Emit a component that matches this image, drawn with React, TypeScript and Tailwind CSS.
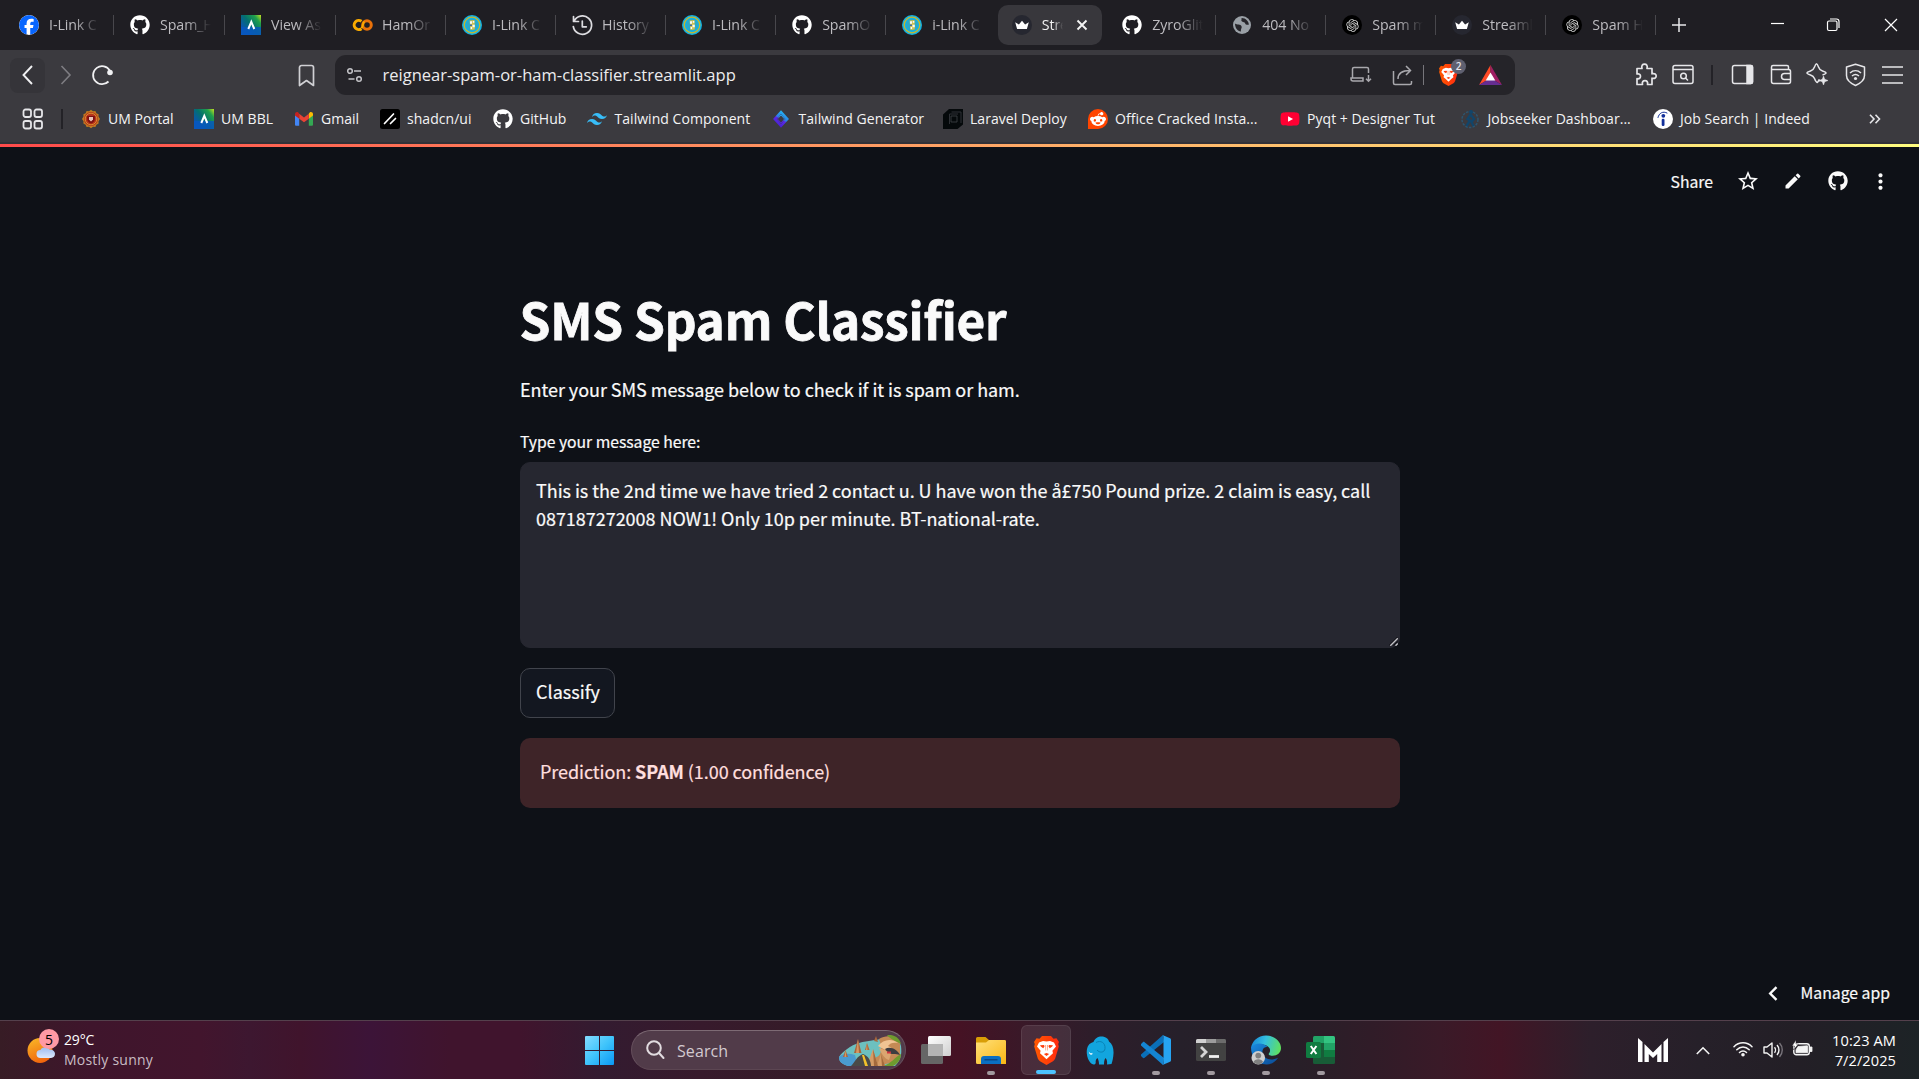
import React from "react";
import { FaFacebook, FaGithub, FaRedditAlien, FaYoutube } from "react-icons/fa6";
import { SiTailwindcss } from "react-icons/si";
import { RiOpenaiFill } from "react-icons/ri";
import { MdEdit, MdStarBorder, MdMoreVert } from "react-icons/md";

/* ---------- brand marks ---------- */

const ViewMark = () => (
  <svg width="20" height="20" viewBox="0 0 20 20">
    <defs>
      <linearGradient id="vm" x1="1" y1="0" x2="0.1" y2="0.7">
        <stop offset="0" stopColor="#c8e020" />
        <stop offset="0.25" stopColor="#1fa04c" />
        <stop offset="0.6" stopColor="#04706e" />
        <stop offset="1" stopColor="#0a55b0" />
      </linearGradient>
    </defs>
    <rect width="20" height="20" fill="url(#vm)" />
    <path d="M0 12h20v8H0z" fill="#0758c0" opacity="0.8" />
    <path d="M7.300 14 10.300 6.800 13.300 14" fill="none" stroke="#fff" strokeWidth="2" />
  </svg>
);

const ColabMark = () => (
  <svg width="21" height="14" viewBox="0 0 21 14" fill="none" strokeWidth="3">
    <circle cx="15" cy="7" r="4.300" stroke="#e8710a" />
    <path d="M9.500 3.300a4.600 4.600 0 1 0 0 7.400" stroke="#f9ab00" />
    <path d="M9.700 10.200 12 3.500" stroke="#f9ab00" strokeWidth="2" />
  </svg>
);

const SealMark = () => (
  <svg width="20" height="20" viewBox="0 0 20 20">
    <circle cx="10" cy="10" r="10" fill="#12b2e4" />
    <circle cx="10" cy="10" r="7.800" fill="none" stroke="#c9b62c" strokeWidth="1.300" />
    <circle cx="10" cy="10" r="5.800" fill="#2aa9c8" />
    <path d="M7.500 5.500 12.500 5 12.800 14.500 8.500 15z" fill="#d3c04a" />
    <path d="M8 6.200h2v2.500H8zM10.500 9.800h2.300v2.400h-2.300zM10.800 6h1.500v1.800h-1.500zM8.600 12h1.500v2H8.600z" fill="#f4f8f8" />
    <path d="M8 9.500h2v1.500H8z" fill="#3f6fa8" />
  </svg>
);

const UmMark = () => (
  <svg width="20" height="20" viewBox="0 0 20 20">
    <path d="m10 .8 2 1.400 2.400-.2 1 2.200 2.200 1-.1 2.400 1.500 2.400-1.500 2.200.1 2.400-2.200 1.100-1 2.200-2.400-.2-2 1.500-2-1.500-2.400.2-1-2.200-2.200-1.100.1-2.400L1 10l1.500-2.400-.1-2.400 2.200-1 1-2.200 2.400.2z" fill="#c07a20" />
    <circle cx="10" cy="10" r="7" fill="#b8321c" />
    <circle cx="10" cy="10" r="5.800" fill="none" stroke="#d6972c" strokeWidth="0.900" />
    <path d="M6.200 7h7.600v3c0 2.500-2.200 4-3.800 4.600C8.500 14 6.200 12.500 6.200 10z" fill="#7d1010" />
    <path d="M8 8h4v2.400L10 12.400l-2-2z" fill="#e9c4b8" />
  </svg>
);

const GmailMark = () => (
  <svg width="20" height="20" viewBox="0 0 20 20">
    <path d="M1 5.500v10c0 .8.500 1.300 1.300 1.300h2.900V8.500z" fill="#4285f4" />
    <path d="M19 5.500v10c0 .8-.5 1.300-1.300 1.300h-2.900V8.500z" fill="#34a853" />
    <path d="M14.800 4.800v4.900L19 6.500V5c0-1.900-2.100-2.500-3.300-1.600z" fill="#fbbc04" />
    <path d="M5.200 9.700V4.800L10 8.400l4.800-3.600v4.900L10 13.300z" fill="#ea4335" />
    <path d="M1 5v1.500l4.200 3.200V4.800l-.9-1.400C3.100 2.500 1 3.100 1 5z" fill="#c5221f" />
  </svg>
);

const ShadcnMark = () => (
  <svg width="20" height="20" viewBox="0 0 20 20">
    <rect width="20" height="20" rx="2.500" fill="#000" />
    <path d="M4.500 14.500 13.500 5M10.500 14.500 15.500 9.500" stroke="#fff" strokeWidth="1.700" strokeLinecap="round" />
  </svg>
);

const DiamondMark = () => (
  <svg width="20" height="20" viewBox="0 0 20 20">
    <defs>
      <linearGradient id="dm" x1="0.8" y1="0" x2="0.3" y2="1">
        <stop offset="0" stopColor="#22b8f0" />
        <stop offset="0.5" stopColor="#2f7ae8" />
        <stop offset="0.55" stopColor="#5a2bea" />
        <stop offset="1" stopColor="#4a1fd0" />
      </linearGradient>
    </defs>
    <path d="M10 3.200 16.200 10 10 16.800 3.800 10z" fill="#3b3a40" stroke="url(#dm)" strokeWidth="2.600" />
    <path d="M10 6 13.600 10 10 14 6.400 10z" fill="#3b3a40" stroke="url(#dm)" strokeWidth="1" />
  </svg>
);

const LaravelMark = () => (
  <svg width="20" height="20" viewBox="0 0 20 20">
    <path d="M0 5.500 6 0h14v15.500L14.500 20H0z" fill="#05090b" />
    <path d="M6.500 15V5H15M8.500 3h9.500v11" fill="none" stroke="#33373b" strokeWidth="0.900" />
    <path d="M8 7h6v6H8z" fill="none" stroke="#3a3e42" strokeWidth="0.900" />
  </svg>
);

const RedditMark = () => (
  <span className="flex size-5 items-center justify-center rounded-full rounded-bl-[3px] bg-[#ff4500]">
    <FaRedditAlien size={16} color="#fff" />
  </span>
);

const JobMark = () => (
  <svg width="20" height="20" viewBox="0 0 20 20">
    <circle cx="10" cy="10.500" r="8" fill="none" stroke="#2c5570" strokeWidth="1.500" strokeDasharray="2.500 1.200" />
    <circle cx="11" cy="3" r="2" fill="#12456a" />
    <path d="M10.500 5.500 7.500 10l2.500 1.500L6.500 17M10.500 5.500l3.500 4.500-2.500 3 2 4" fill="none" stroke="#12456a" strokeWidth="2.400" />
  </svg>
);

const IndeedMark = () => (
  <svg width="20" height="20" viewBox="0 0 20 20">
    <circle cx="10" cy="10" r="10" fill="#fff" />
    <circle cx="10.300" cy="6.800" r="1.900" fill="#12309a" />
    <rect x="8.700" y="9.800" width="2.800" height="7.200" rx="1.200" fill="#12309a" />
    <path d="M5 8.500C6 4 10 1.800 14 4" fill="none" stroke="#12309a" strokeWidth="1" strokeLinecap="round" />
  </svg>
);

const CrownMark = () => (
  <svg width="20" height="20" viewBox="0 0 20 20">
    <circle cx="10" cy="10" r="10" fill="#262730" />
    <path d="M3.200 7.200 6.900 9.500 10 5.800l3.100 3.700 3.700-2.300-1.900 6.900H5.100z" fill="#fff" />
  </svg>
);

const GlobeMark = () => (
  <svg width="20" height="20" viewBox="0 0 20 20">
    <circle cx="10" cy="10" r="9" fill="#9aa0a6" />
    <path d="M3 8.500C5 10 8.500 9 9.500 11.200c.8 2-1 2.300-.5 5.300-3.500-.4-6-3.500-6-8zM9.500 3c.5 1.500-1 2.500.5 3.500s2.500.2 3.200 2c.5 1.500 2 1.300 3.600 1.200C17 6.500 13.500 2.800 9.500 3z" fill="#26252a" />
  </svg>
);

const HistoryMark = () => (
  <svg width="21" height="21" viewBox="0 0 21 21" fill="none" stroke="#dcdce0" strokeWidth="1.700" strokeLinecap="round" strokeLinejoin="round">
    <path d="M1.500 1.500v5h5M2 6.300a9.200 9.200 0 1 1-.7 5.200" />
    <path d="M10.300 6v5.800h4" />
  </svg>
);

const OpenAiMark = () => (
  <span className="flex size-5 items-center justify-center rounded-full bg-black">
    <RiOpenaiFill size={15} color="#d8d8d8" />
  </span>
);

const BraveMark = ({ size }: { size: number }) => (
  <svg width={size} height={size * 1.16} viewBox="0 0 25 29">
    <defs>
      <linearGradient id="br" x1="0" y1="0" x2="1" y2="0">
        <stop offset="0" stopColor="#ff5a00" />
        <stop offset="1" stopColor="#ff2a10" />
      </linearGradient>
    </defs>
    <path d="M8 0h9l2.500 2.800 3-.6L25 6l-.8 2 .6 2.500-3.600 12c-.5 1.200-1.200 2-2.200 2.700L12.500 29 6 25.200c-1-.7-1.700-1.500-2.200-2.700L.2 10.500.8 8 0 6l2.500-3.800 3 .6z" fill="url(#br)" />
    <path d="M12.500 5.500 16 5l4 1.500 2 4-3.600 4.200.6 2.600-2.500 2.200-4 3.700-4-3.700L6 17.300l.6-2.600L3 10.500l2-4L9 5z" fill="#fff" />
    <path d="M6 9.200 10 9l.6 1.200L9.300 12.200 7 10.800zM19 9.200 15 9l-.6 1.200 1.300 2 2.300-1.400zM12.500 17l2.600 1-2.600 1.900L9.900 18z" fill="#ff4010" />
    <path d="M11.300 9h.8v5.500h-.6zM13 9h.8l-.2 5.500H13z" fill="#ff8a60" />
  </svg>
);

/* ---------- tab strip ---------- */

type Tab = { icon: React.ReactNode; title: string; w?: string; active?: boolean; noSep?: boolean };

const gh = <FaGithub size={20} color="#fff" />;

const tabs: Tab[] = [
  { icon: <FaFacebook size={20} color="#0866ff" className="rounded-full bg-white" />, title: "I-Link C", w: "w-[111px]" },
  { icon: gh, title: "Spam_H", w: "w-[111px]" },
  { icon: <ViewMark />, title: "View Ass", w: "w-[111px]" },
  { icon: <ColabMark />, title: "HamOr" },
  { icon: <SealMark />, title: "I-Link C" },
  { icon: <HistoryMark />, title: "History" },
  { icon: <SealMark />, title: "I-Link C" },
  { icon: gh, title: "SpamO" },
  { icon: <SealMark />, title: "i-Link C", noSep: true },
  { icon: <CrownMark />, title: "Stre", active: true, noSep: true },
  { icon: gh, title: "ZyroGlit" },
  { icon: <GlobeMark />, title: "404 No" },
  { icon: <OpenAiMark />, title: "Spam m" },
  { icon: <CrownMark />, title: "Streaml" },
  { icon: <OpenAiMark />, title: "Spam H" },
];

const TabItem = ({ tab }: { tab: Tab }) => {
  if (tab.active)
    return (
      <div className="w-[110.040px] shrink-0 pr-[3.500px] pl-[2.500px]">
        <div className="flex h-10 items-center rounded-[10px] bg-[#38373c] pl-[14px]">
          {tab.icon}
          <span className="ml-[9.500px] w-[21.500px] overflow-hidden pb-px whitespace-nowrap text-[#f2f2f2] [mask-image:linear-gradient(to_right,black_50%,transparent_100%)]">
            {tab.title}
          </span>
          <svg className="ml-[13px]" width="12" height="12" viewBox="0 0 12 12" stroke="#f4f4f4" strokeWidth="1.900">
            <path d="M1.500 1.500l9 9M10.500 1.500l-9 9" />
          </svg>
        </div>
      </div>
    );
  return (
    <div className={`flex h-10 shrink-0 items-center pl-4 ${tab.w ?? "w-[110.040px]"}`}>
      <span className="flex w-[21px] shrink-0 justify-center">{tab.icon}</span>
      <span className="ml-[9.500px] w-[51px] overflow-hidden pb-px whitespace-nowrap text-[#bdbcc0] [mask-image:linear-gradient(to_right,black_50%,transparent_100%)]">
        {tab.title}
      </span>
      {!tab.noSep && <span className="ml-auto h-5 w-px bg-[#48474c]" />}
    </div>
  );
};

const TabStrip = () => (
  <div className="flex h-[50px] items-center bg-[#1f1e23] pl-[2.500px] text-[14.200px] tracking-[-0.005em]">
    {tabs.map((t, i) => (
      <TabItem key={i} tab={t} />
    ))}
    <svg className="ml-[16px]" width="14" height="14" viewBox="0 0 14 14" stroke="#e8e8ea" strokeWidth="1.500">
      <path d="M7 0v14M0 7h14" />
    </svg>
    <div className="ml-auto flex items-center">
      <svg width="57" height="20" viewBox="0 0 57 20" stroke="#fff" strokeWidth="1.200">
        <path d="M21 8.500h13" />
      </svg>
      <svg width="56" height="20" viewBox="0 0 56 20" fill="none" stroke="#fff" strokeWidth="1.200">
        <rect x="20.500" y="6" width="9.500" height="9.500" rx="1.500" />
        <path d="M23 4h6.500a2.500 2.500 0 0 1 2.500 2.500V13" />
      </svg>
      <svg width="56" height="20" viewBox="0 0 56 20" stroke="#fff" strokeWidth="1.200">
        <path d="M22 4l12 12M34 4l-12 12" />
      </svg>
    </div>
  </div>
);

/* ---------- navigation bar ---------- */

const NavBar = () => (
  <div className="flex h-[50px] items-center pl-[10px]">
    <div className="flex h-[35px] w-[35px] items-center justify-center rounded-[8px] bg-[#353439]">
      <svg width="12" height="20" viewBox="0 0 12 20" fill="none" stroke="#f0f0f2" strokeWidth="1.900">
        <path d="M10 1 1.500 10l8.500 9" />
      </svg>
    </div>
    <svg className="ml-[14.500px]" width="12" height="20" viewBox="0 0 12 20" fill="none" stroke="#7e7d82" strokeWidth="1.600">
      <path d="M1.500 1 10 10l-8.500 9" />
    </svg>
    <svg className="ml-[19.500px]" width="24" height="22" viewBox="0 0 24 22" fill="none" stroke="#f0f0f2" strokeWidth="1.800">
      <path d="M17.500 17.500A9 9 0 1 1 18.800 6.500" />
      <circle cx="19" cy="8.500" r="2.800" fill="#f0f0f2" stroke="none" />
    </svg>
    <svg className="ml-[182px]" width="20" height="23" viewBox="0 0 20 23" fill="none" stroke="#d0d0d4" strokeWidth="1.700" strokeLinejoin="round">
      <path d="M2.500 21.500V3.500a2 2 0 0 1 2-2h10a2 2 0 0 1 2 2v18l-7-5z" />
    </svg>
    <div className="ml-[18px] flex h-10 w-[1180px] items-center rounded-[11px] bg-[#252429] pl-[11px]">
      <svg width="18" height="16" viewBox="0 0 18 16" fill="none" stroke="#c4c4c8" strokeWidth="1.500">
        <circle cx="4" cy="4" r="2.300" />
        <path d="M8 4h7M2.500 12h6" />
        <circle cx="13" cy="12" r="2.300" />
      </svg>
      <span className="ml-[18.500px] text-[16.550px] leading-none whitespace-nowrap text-[#ececee]">
        reignear-spam-or-ham-classifier.streamlit.app
      </span>
      <div className="ml-auto flex items-center">
        <svg width="22" height="18" viewBox="0 0 22 18" fill="none" stroke="#a9a8ad" strokeWidth="1.500">
          <path d="M2.500 12V3a1.500 1.500 0 0 1 1.500-1.500h13A1.500 1.500 0 0 1 18.500 3v4M1 12h12v3H3a2 2 0 0 1-2-2zM18.500 9v6M16 12.800l2.500 2.500 2.500-2.500" />
        </svg>
        <svg className="ml-[20px]" width="21" height="21" viewBox="0 0 21 21" fill="none" stroke="#a9a8ad" strokeWidth="1.500">
          <path d="M1.500 6v12a1.500 1.500 0 0 0 1.500 1.500h15a1.500 1.500 0 0 0 1.500-1.500v-2M6 14c0-6 4-8.500 12-8.500M14 1l4.500 4.500L14 10" />
        </svg>
        <span className="ml-[10px] h-5 w-px bg-[#77767b]" />
        <span className="relative ml-[15px] pt-px">
          <BraveMark size={19} />
          <span className="absolute -top-[4px] left-[12px] flex size-[15px] items-center justify-center rounded-full bg-[#5f6070] text-[10px] font-semibold text-[#e4e4ea]">
            2
          </span>
        </span>
        <svg className="mr-[13px] ml-[21px]" width="23" height="20" viewBox="0 0 23 20">
          <path d="M11.500 0 0 20l11.500-7z" fill="#ff4a26" />
          <path d="M11.500 0 23 20l-11.500-7z" fill="#9e1f63" />
          <path d="M0 20h23l-11.500-7z" fill="#662d91" />
          <path d="M11.500 7.500 16.300 15.500H6.700z" fill="#fff" />
        </svg>
      </div>
    </div>
    <div className="ml-auto flex items-center pr-2 text-[#e6e6e9]">
      <svg width="37" height="24" viewBox="0 0 37 24" fill="none" stroke="currentColor" strokeWidth="1.700" strokeLinejoin="round">
        <path d="M10 5.500h5c-.8-2.800.5-4.300 2.500-4.300S20.800 2.700 20 5.500h5v5.300c2.800-.8 4.200.5 4.200 2.200S27.800 16 25 15.200v6.300h-4.500c.6-2.600-.6-3.800-2.500-3.800s-3.200 1.200-2.500 3.800H10v-5.800c2.500.4 3.500-.7 3.500-2.400S12.500 10.500 10 11z" />
      </svg>
      <svg width="38" height="24" viewBox="0 0 38 24" fill="none" stroke="currentColor" strokeWidth="1.500">
        <rect x="9" y="2.500" width="20" height="18" rx="2" />
        <path d="M9 6.500h20M21.500 15l2.500 2.500" />
        <circle cx="19.500" cy="13" r="2.800" />
      </svg>
      <span className="mr-[9px] ml-[9px] h-5 w-[2px] bg-[#232227]" />
      <svg width="41" height="24" viewBox="0 0 41 24" fill="none" stroke="currentColor" strokeWidth="1.500">
        <rect x="10.500" y="2.500" width="20" height="18" rx="2" />
        <path d="M25 2.500h4a1.500 1.500 0 0 1 1.500 1.500v15a1.500 1.500 0 0 1-1.500 1.500h-4z" fill="currentColor" />
      </svg>
      <svg width="37" height="24" viewBox="0 0 37 24" fill="none" stroke="currentColor" strokeWidth="1.500">
        <path d="M25.500 6.500V4a1.500 1.500 0 0 0-1.500-1.500H10A1.500 1.500 0 0 0 8.500 4v14.500a2 2 0 0 0 2 2h15a2 2 0 0 0 2-2v-10a2 2 0 0 0-2-2h-17M27.500 10.500h-6a3 3 0 0 0 0 6h6" />
      </svg>
      <svg width="37" height="24" viewBox="0 0 37 24" fill="none" stroke="currentColor" strokeWidth="1.500" strokeLinejoin="round">
        <path d="M19.500 18.500 19 16.800 17.500 19.500Q16 19.500 14.500 15.500 13.500 13 10.500 12 7 10.800 7 10q0-.8 3.500-2 3-1 4-4Q15.700.8 16.500.8t2 3.200q1 3 4 4 3.500 1.200 3.500 2t-3.500 2" />
        <path d="m23.500 13 1.200 3.300 3.300 1.200-3.300 1.200-1.200 3.300-1.200-3.300-3.300-1.200 3.300-1.200z" fill="currentColor" strokeWidth="0.500" />
      </svg>
      <svg width="37" height="24" viewBox="0 0 37 24" fill="none" stroke="currentColor" strokeWidth="1.500" strokeLinejoin="round">
        <path d="M18.500 1.200 27.500 4v8.500c0 5-4.500 8-9 10-4.500-2-9-5-9-10V4z" />
        <path d="M13 10c3.300-3 7.700-3 11 0M15 13c2.200-1.800 4.800-1.800 7 0" />
        <circle cx="18.500" cy="15.500" r="1.600" fill="currentColor" stroke="none" />
      </svg>
      <svg width="37" height="24" viewBox="0 0 37 24" stroke="currentColor" strokeWidth="1.700">
        <path d="M8 4h21M8 12h21M8 20h21" />
      </svg>
    </div>
  </div>
);

/* ---------- bookmarks ---------- */

const bookmarks = [
  { w: "w-[113px]", icon: <UmMark />, label: "UM Portal" },
  { w: "w-[100px]", icon: <ViewMark />, label: "UM BBL" },
  { w: "w-[86px]", icon: <GmailMark />, label: "Gmail" },
  { w: "w-[113px]", icon: <ShadcnMark />, label: "shadcn/ui" },
  { w: "w-[94.500px]", icon: gh, label: "GitHub" },
  { w: "w-[184px]", icon: <SiTailwindcss size={20} color="#38bdf8" />, label: "Tailwind Component" },
  { w: "w-[171.500px]", icon: <DiamondMark />, label: "Tailwind Generator" },
  { w: "w-[145px]", icon: <LaravelMark />, label: "Laravel Deploy" },
  { w: "w-[192px]", icon: <RedditMark />, label: "Office Cracked Insta..." },
  { w: "w-[180.500px]", icon: <FaYoutube size={20} color="#ff0033" className="bg-[linear-gradient(#fff,#fff)] bg-[length:8px_8px] bg-center bg-no-repeat" />, label: "Pyqt + Designer Tut" },
  { w: "w-[192.500px]", icon: <JobMark />, label: "Jobseeker Dashboar..." },
  { w: "w-[200px]", icon: <IndeedMark />, label: "Job Search | Indeed" },
];

const BookmarkBar = () => (
  <div className="flex h-[38px] items-center pl-[22px] text-[14px] tracking-[0.003em] text-[#f4f4f5]">
    <svg width="22" height="22" viewBox="0 0 22 22" fill="none" stroke="#e6e6e9" strokeWidth="1.800">
      <rect x="1.500" y="1.500" width="7.500" height="7.500" rx="2" />
      <rect x="12.500" y="1.500" width="7.500" height="7.500" rx="2" />
      <rect x="1.500" y="13" width="7.500" height="7.500" rx="2" />
      <rect x="12.500" y="13" width="7.500" height="7.500" rx="2" />
    </svg>
    <span className="mr-[18px] ml-[16.500px] h-5 w-[2px] bg-[#232227]" />
    {bookmarks.map((b) => (
      <div key={b.label} className={`flex shrink-0 items-center gap-[7.500px] ${b.w}`}>
        <span className="flex w-5 shrink-0 justify-center">{b.icon}</span>
        <span className="pb-[2px] whitespace-nowrap">{b.label}</span>
      </div>
    ))}
    <svg className="mr-[38px] ml-auto" width="12" height="10" viewBox="0 0 12 10" fill="none" stroke="#e6e6e9" strokeWidth="1.600">
      <path d="M1 .8 5 5 1 9.200M6.500.8l4 4.200-4 4.200" />
    </svg>
  </div>
);

/* ---------- app page ---------- */

const AppPage = () => (
  <main className="flex flex-1 flex-col bg-[#0e1117] font-['Noto_Sans_CJK_SC',sans-serif] text-[#fafafa] [-webkit-text-stroke:0.2px]">
    <div className="h-[3px] bg-[linear-gradient(90deg,#ff4b4b,#fffd80)]" />
    <div className="flex h-[70px] items-center justify-end pr-[31px]">
      <span className="text-[15.750px]">Share</span>
      <MdStarBorder className="mb-[2px] ml-[23px]" size={24} />
      <MdEdit className="mb-[2px] ml-[23px]" size={20} />
      <FaGithub className="mb-[2px] ml-[25px]" size={20} />
      <MdMoreVert className="mb-[2px] ml-[20px] -mr-[5px]" size={25} />
    </div>
    <div className="mx-auto mt-[71px] flex w-[880px] flex-col">
      <h1 className="pt-px text-[49.500px] leading-[60px] font-bold tracking-[-0.004em] [-webkit-text-stroke:0.8px]">
        SMS Spam Classifier
      </h1>
      <p className="mt-[26px] pl-[0.500px] text-[18px] leading-[28px] tracking-[-0.002em]">
        Enter your SMS message below to check if it is spam or ham.
      </p>
      <label htmlFor="msg" className="mt-[27px] pl-[0.500px] text-[15.750px] leading-6 tracking-[-0.002em]">
        Type your message here:
      </label>
      <div className="relative mt-2 h-[186px]">
        <textarea
          id="msg"
          className="h-[186px] w-[880px] resize-none rounded-[10px] border border-[#262730] bg-[#262730] py-[13px] pr-[14.500px] pl-[15.500px] text-[18px] leading-[28px] tracking-[-0.002em] outline-none"
          defaultValue="This is the 2nd time we have tried 2 contact u. U have won the å£750 Pound prize. 2 claim is easy, call 087187272008 NOW1! Only 10p per minute. BT-national-rate."
        />
        <svg className="absolute right-[2px] bottom-[2px]" width="9" height="9" viewBox="0 0 9 9">
          <path d="M0 8.500 8.500 0M4.500 8.500l4-4" stroke="#0a0a0e" strokeWidth="1" />
          <path d="M1.300 8.800 8.800 1.300M6.500 8.800l2.300-2.300" stroke="#c4c4c8" strokeWidth="1.300" />
        </svg>
      </div>
      <button className="mt-5 h-[50px] w-[95px] rounded-[10px] border border-[#41444c] bg-[#131720] pb-[3px] pl-[2px] text-[18px]">Classify</button>
      <div className="mt-5 flex h-[70px] items-center rounded-[10px] bg-[#3e2428] px-[20.500px] pb-[3px] text-[18px] tracking-[-0.004em] text-[#ffdede]">
        <p>
          Prediction: <strong className="font-bold">SPAM</strong> (1.00 confidence)
        </p>
      </div>
    </div>
    <div className="mt-auto flex h-[53px] items-center justify-end pr-[29px]">
      <svg width="10" height="15" viewBox="0 0 10 15" fill="none" stroke="#fafafa" strokeWidth="2.400">
        <path d="M8.500 1.200 2.200 7.500l6.300 6.300" />
      </svg>
      <span className="ml-[23px] pb-px text-[15.750px]">Manage app</span>
    </div>
  </main>
);

/* ---------- taskbar ---------- */

const Weather = () => (
  <div className="flex items-center">
    <div className="relative">
      <svg width="30" height="36" viewBox="0 0 30 36">
        <defs>
          <linearGradient id="sun" x1="0.2" y1="0" x2="0.6" y2="1">
            <stop offset="0" stopColor="#f9b526" />
            <stop offset="1" stopColor="#f0620c" />
          </linearGradient>
          <linearGradient id="cl" x1="0" y1="0" x2="0" y2="1">
            <stop offset="0" stopColor="#9dbcf0" />
            <stop offset="1" stopColor="#dde8fb" />
          </linearGradient>
        </defs>
        <circle cx="13" cy="18.500" r="12.500" fill="url(#sun)" />
        <path d="M13.500 26a4 4 0 0 1 0-8c1.500-3.500 7-3.500 9-.5 3.500-.5 5.500 2 5.500 4.300S26.500 26 24 26z" fill="url(#cl)" />
      </svg>
      <span className="absolute -top-[3px] left-[12px] flex size-5 items-center justify-center rounded-full bg-[#ff99a4] text-[14px] text-black">5</span>
    </div>
    <div className="ml-[7px] pb-px text-[14px] leading-5">
      <div className="tracking-[-0.01em] text-white">29°C</div>
      <div className="tracking-[0.016em] text-[#c9bcc4]">Mostly sunny</div>
    </div>
  </div>
);

const SearchArt = () => (
  <svg width="63" height="32" viewBox="0 0 63 32">
    <path d="M0 22C3 17 12 10 20 8 30 5 36 6 44 3c8-3 16 0 18 8 1 8 0 14-6 20H9C3 29 0 27 0 22z" fill="#6cc0bf" />
    <path d="M0 22c4-4 10-4 16-2l2 8-6 3H9C3 29 0 27 0 22z" fill="#4a9bd0" />
    <path d="M40 4c8-5 18-3 21 5v14c-6 6-14 5-22 8l-3-8c6-2 8-8 4-19z" fill="#c58a55" />
    <path d="M48 0c8-1 13 4 14 9-5-3-10-4-14-9zM44 31c8-2 12-9 18-12 0 6-4 10-8 12z" fill="#6f9a2e" />
    <path d="M39 11c5-7 14-8 20-3-5-1-8 0-10 3 3 1 5 4 4 6-5-1-9-3-14-6z" fill="#f0c493" />
    <path d="M40 13c4 1 9 3 12 6l-2 6c-4-1-7-5-10-12z" fill="#dba570" />
    <path d="M15 18 19 4l3.500 14zM26 15l2-7 2.500 7zM35 6l2-5 2 6zM4 22l2.500-7L9 22z" fill="#a8673c" />
    <path d="m17 18 2-14 1 14zM27 15l1-7 .5 7zM5.500 22l1-7 .8 7z" fill="#d79862" />
    <path d="m28 31 6-17 5 17zM38 31l4-12 4 12z" fill="#d59c66" />
    <path d="m34 14 5 17h-4zM42 19l4 12h-3z" fill="#a56a3c" />
    <path d="M12 31c4-4 6-10 12-12 6 2 8 8 8 12z" fill="#4a4a48" />
    <path d="m23 20 3 11h3l-4-11z" fill="#f3c12b" />
    <path d="M46 14c5-3 12 0 15 6-5-2-8 0-10-2-2-1-4-2-5-4z" fill="#3d3d40" />
    <path d="M48 16.500h4v2h-4z" fill="#d2343f" />
  </svg>
);

const TaskItem = ({ children, dot, active }: { children: React.ReactNode; dot?: boolean; active?: boolean }) => (
  <div className="flex w-[55px] shrink-0 justify-center">
    <div
      className={`relative flex h-[50px] w-[50px] items-center justify-center rounded-[6px] ${active ? "border border-white/8 bg-white/9" : ""}`}
    >
      {children}
      {dot && <span className="absolute bottom-0 h-1 w-2 rounded-full bg-[#a29aa0]" />}
      {active && <span className="absolute bottom-0 h-1 w-5 rounded-full bg-[#4cc2ff]" />}
    </div>
  </div>
);

const Taskbar = () => (
  <footer className="flex h-[59px] items-center border-t border-[#54404c] bg-[linear-gradient(90deg,#371c25_0px,#3f152c_90px,#42152d_200px,#3d1730_250px,#40142c_300px,#3c1438_370px,#40142d_450px,#40142d_520px,#331b30_600px,#371a2c_700px,#351b28_810px,#421425_900px,#451224_960px,#3a1828_1020px,#2e1d2a_1090px,#26202a_1180px,#281f28_1300px,#301c28_1370px,#3a1a28_1440px,#421525_1500px,#2d1f2b_1590px,#262029_1700px,#231f26_1800px,#1d2326_1919px)] pl-[27px]">
    <div className="w-[558px]">
      <Weather />
    </div>
    <svg width="29" height="29" viewBox="0 0 29 29">
      <defs>
        <linearGradient id="win" x1="0" y1="0" x2="1" y2="1">
          <stop offset="0" stopColor="#84dcff" />
          <stop offset="0.5" stopColor="#3fc4fb" />
          <stop offset="1" stopColor="#0a98f5" />
        </linearGradient>
      </defs>
      <path d="M0 1a1 1 0 0 1 1-1h13v14H0zM15 0h13a1 1 0 0 1 1 1v13H15zM0 15h14v14H1a1 1 0 0 1-1-1zM15 15h14v13a1 1 0 0 1-1 1H15z" fill="url(#win)" />
    </svg>
    <div className="ml-[17px] flex h-10 w-[275px] items-center rounded-full border border-t-[#7d6a74] border-r-[#654f5c] border-b-[#5c4652] border-l-[#654f5c] bg-[#513b49] pl-[14px]">
      <svg width="20" height="20" viewBox="0 0 20 20" fill="none" stroke="#e2dce0" strokeWidth="2" strokeLinecap="round">
        <circle cx="8" cy="8" r="6.800" />
        <path d="m13 13 4.500 5" />
      </svg>
      <span className="ml-[11px] pt-px text-[16px] tracking-[0.005em] text-[#d3cad0]">Search</span>
      <span className="mr-[3px] ml-auto pt-[2px]">
        <SearchArt />
      </span>
    </div>
    <div className="ml-[2.500px] flex">
      <TaskItem>
        <svg width="30" height="28" viewBox="0 0 30 28">
          <defs>
            <linearGradient id="tv" x1="0" y1="0" x2="1" y2="1">
              <stop offset="0" stopColor="#fff" />
              <stop offset="1" stopColor="#cfcfcf" />
            </linearGradient>
          </defs>
          <rect y="8" width="22" height="20" rx="1.500" fill="#666" />
          <rect x="7" width="23" height="20" rx="1.500" fill="url(#tv)" />
          <path d="M7 8h15v12H8.500A1.500 1.500 0 0 1 7 18.500z" fill="#b4b4b4" />
        </svg>
      </TaskItem>
      <TaskItem dot>
        <svg width="30" height="27" viewBox="0 0 30 27">
          <defs>
            <linearGradient id="fo" x1="0" y1="0" x2="1" y2="1">
              <stop offset="0" stopColor="#ffe07a" />
              <stop offset="1" stopColor="#f9b714" />
            </linearGradient>
          </defs>
          <path d="M0 1.500A1.500 1.500 0 0 1 1.500 0h8L13 3h15.500A1.500 1.500 0 0 1 30 4.500V12H0z" fill="#d99e06" />
          <path d="M0 5.500h10L13 3h15.500A1.500 1.500 0 0 1 30 4.500V27H1.500A1.500 1.500 0 0 1 0 25.500z" fill="url(#fo)" />
          <path d="M5 27v-5a3 3 0 0 1 3-3h14a3 3 0 0 1 3 3v5z" fill="#0b6fc2" />
          <path d="M8.500 22.800h13" stroke="#0a3f78" strokeWidth="1.200" />
        </svg>
      </TaskItem>
      <TaskItem active>
        <BraveMark size={25} />
      </TaskItem>
      <TaskItem>
        <svg className="mr-[2px]" width="28" height="29" viewBox="0 0 28 29">
          <path d="M.8 17.500C.3 11 3 7 7.500 6 9 1.500 14-.5 18.500 1c2.500.8 4 2.500 4.500 4.500 3.500 2.500 4.800 7 4.500 12-.2 4-1 7.500-2 10.500l-4.500.5c.3-3 0-5-1.500-6.500-1.200 1.500-1.500 4-1.500 6.500h-5c0-2.500-.5-4.500-1.500-6.500-1.500 1.200-2 2.700-1.800 4.500.2 2.500-3.400 2.500-5 .5C2.500 24.500 1 21 .8 17.500z" fill="#12a5de" />
          <path d="M10 6.500c4.500-2.500 9.500 0 9 6-.5 4.500-5.500 4.500-8 1.500" fill="none" stroke="#0882b5" strokeWidth="1" />
          <path d="M2.800 15.500c1 2 2.300 2.200 3.700 1.200l-.3 1.800c-2 .5-3.200-.5-3.400-3z" fill="#fff" />
        </svg>
      </TaskItem>
      <TaskItem dot>
        <svg width="30" height="30" viewBox="0 0 30 30">
          <path d="M22 0 0 19.500c-.3.700-.2 1.300.3 1.800l1.500 1.500c.6.500 1.200.5 1.800 0L23 7z" fill="#0a6fb8" />
          <path d="M22 30 0 10.500c-.3-.7-.2-1.300.3-1.800l1.500-1.500c.6-.5 1.200-.5 1.800 0L23 23z" fill="#1485d2" />
          <path d="M21.500 0 29 3.300c.6.300 1 .8 1 1.500v20.400c0 .7-.4 1.200-1 1.500L21.500 30c.8-.5 1-1.500 1-2.500v-25c0-1-.2-2-1-2.500z" fill="#26a4f2" />
        </svg>
      </TaskItem>
      <TaskItem dot>
        <svg width="30" height="22" viewBox="0 0 30 22">
          <rect width="30" height="22" rx="1.500" fill="#424242" />
          <path d="M0 4V1.500A1.500 1.500 0 0 1 1.500 0H10v4z" fill="#d0d0d0" />
          <path d="M10 0h10v4H10z" fill="#9b9b9b" />
          <path d="M20 0h8.500A1.500 1.500 0 0 1 30 1.500V4H20z" fill="#6c6c6c" />
          <path d="m5 8 5 5-5 5" fill="none" stroke="#d4d4d4" strokeWidth="2.800" />
          <path d="M13 17.500h10" stroke="#f0f0f0" strokeWidth="2.800" />
        </svg>
      </TaskItem>
      <TaskItem dot>
        <svg width="30" height="30" viewBox="0 0 31 30">
          <defs>
            <linearGradient id="e1" x1="0" y1="0.3" x2="1" y2="0.5">
              <stop offset="0" stopColor="#1787d8" />
              <stop offset="0.45" stopColor="#34bfe0" />
              <stop offset="1" stopColor="#5fe060" />
            </linearGradient>
            <linearGradient id="e2" x1="0" y1="0" x2="1" y2="1">
              <stop offset="0" stopColor="#1a8be0" />
              <stop offset="1" stopColor="#0b4a94" />
            </linearGradient>
          </defs>
          <path d="M0 13C1 6 7 0 15.500 0S31 6 31 13c0 5-4 8-8.500 8-3 0-5-1-4-2.500 1.500-1.500 1.500-4 .5-5.500C17 9 8 7 0 13z" fill="url(#e1)" />
          <path d="M0 12.500c4-5.500 13-5.500 17-.5-4-1-6 3-5 7 1.500 5 8 8 16 4-3 5-8 7-12 7C6 30 0 22 0 12.500z" fill="url(#e2)" />
          <circle cx="7.500" cy="23" r="7" fill="#cfcfcf" />
          <circle cx="7.500" cy="20.800" r="3" fill="#808080" />
          <path d="M2.500 27.500c1-4 9-4 10 0-3 3-7 3-10 0z" fill="#808080" />
        </svg>
      </TaskItem>
      <TaskItem dot>
        <svg width="30" height="28" viewBox="0 0 30 28">
          <path d="M7 1.500A1.500 1.500 0 0 1 8.500 0H18v7H7z" fill="#21a366" />
          <path d="M18 0h9.500A1.500 1.500 0 0 1 29 1.500V7H18z" fill="#33c481" />
          <path d="M7 7h11v7H7zM7 14h11v7H7z" fill="#185c37" />
          <path d="M18 7h11v7H18z" fill="#21a366" />
          <path d="M18 14h11v7H18z" fill="#107c41" />
          <path d="M7 21h22v5.500a1.500 1.500 0 0 1-1.500 1.500h-19A1.500 1.500 0 0 1 7 26.500z" fill="#185c37" />
          <rect y="6" width="15" height="16" rx="1.500" fill="#107c41" />
          <path d="m4.800 10 5.600 8M10.400 10l-5.600 8" stroke="#fff" strokeWidth="2" />
        </svg>
      </TaskItem>
    </div>
    <div className="ml-auto flex items-center pr-[23px]">
      <svg width="30" height="24" viewBox="0 0 30 24" fill="#fff">
        <path d="M0 0 4.500 4v20H0zM30 0l-4.500 4v20H30zM6.500 6 15 14.500 23.500 6v18h-4.300v-8L15 20l-4.200-4v8H6.500z" />
      </svg>
      <svg className="ml-[28px]" width="14" height="9" viewBox="0 0 14 9" fill="none" stroke="#f4f4f4" strokeWidth="1.600">
        <path d="M.8 8 7 1.800 13.200 8" />
      </svg>
      <svg className="mb-[2px] ml-[23px]" width="20" height="16" viewBox="0 0 20 16" fill="none" stroke="#f4f4f4" strokeWidth="1.500" strokeLinecap="round">
        <path d="M1 5.800c5-5.300 13-5.300 18 0M3.800 8.800c3.600-3.700 8.800-3.700 12.400 0M6.500 11.500c2-2 5-2 7 0" />
        <circle cx="10" cy="13.800" r="1.800" fill="#f4f4f4" stroke="none" />
      </svg>
      <svg className="ml-[10px]" width="21" height="18" viewBox="0 0 21 18" fill="none" stroke="#f4f4f4" strokeWidth="1.400" strokeLinejoin="round">
        <path d="M1 6v6h3l5 4V2L4 6zM11.500 6.200c1.300 1.500 1.300 4.100 0 5.600M14 4c2.600 2.800 2.600 7.200 0 10" />
        <path d="M16.500 2c3.700 4 3.700 10 0 14" stroke="#77737a" />
      </svg>
      <svg className="mb-[3px] ml-[8.500px]" width="21" height="17" viewBox="0 0 21 17">
        <rect x="1.800" y="3.800" width="15.500" height="11" rx="2.500" fill="none" stroke="#f4f4f4" strokeWidth="1.400" />
        <path d="M6 6.500 15.500 5.800v7H4v-3zM18 7h2v4.500h-2z" fill="#f4f4f4" stroke="#f4f4f4" strokeWidth="0.800" strokeLinejoin="round" />
        <path d="M4 0 0 6h2.500L1.500 10 6.500 4H4z" fill="#fff" stroke="#262029" strokeWidth="0.500" />
      </svg>
      <div className="ml-[19px] pb-px text-right text-[14.600px] leading-5 tracking-[0.005em] whitespace-nowrap text-white">
        <div>10:23 AM</div>
        <div>7/2/2025</div>
      </div>
    </div>
  </footer>
);

export default function App() {
  return (
    <div className="flex h-screen w-full flex-col overflow-hidden bg-[#0e1117] font-['Open_Sans','Noto_Sans',sans-serif]">
      <header className="h-[144px] border-b-2 border-[#333238] bg-[#3b3a3f]">
        <TabStrip />
        <NavBar />
        <BookmarkBar />
      </header>
      <AppPage />
      <Taskbar />
    </div>
  );
}
